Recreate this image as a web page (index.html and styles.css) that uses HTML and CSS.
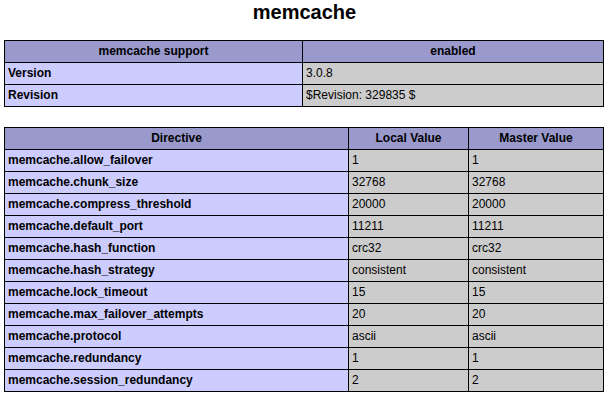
FILE: index.html
```html
<!DOCTYPE html>
<html>
<head>
<meta charset="utf-8">
<title>memcache</title>
<link rel="stylesheet" href="styles.css">
</head>
<body>
<h1 class="title">memcache</h1>
<table class="info">
  <colgroup><col class="c-support"><col></colgroup>
  <tr class="h"><th>memcache support</th><th>enabled</th></tr>
  <tr><td class="e">Version</td><td class="v">3.0.8</td></tr>
  <tr><td class="e">Revision</td><td class="v">$Revision: 329835 $</td></tr>
</table>
<table class="info directives">
  <colgroup><col class="c-dir"><col class="c-local"><col></colgroup>
  <tr class="h"><th>Directive</th><th>Local Value</th><th>Master Value</th></tr>
  <tr><td class="e">memcache.allow_failover</td><td class="v">1</td><td class="v">1</td></tr>
  <tr><td class="e">memcache.chunk_size</td><td class="v">32768</td><td class="v">32768</td></tr>
  <tr><td class="e">memcache.compress_threshold</td><td class="v">20000</td><td class="v">20000</td></tr>
  <tr><td class="e">memcache.default_port</td><td class="v">11211</td><td class="v">11211</td></tr>
  <tr><td class="e">memcache.hash_function</td><td class="v">crc32</td><td class="v">crc32</td></tr>
  <tr><td class="e">memcache.hash_strategy</td><td class="v">consistent</td><td class="v">consistent</td></tr>
  <tr><td class="e">memcache.lock_timeout</td><td class="v">15</td><td class="v">15</td></tr>
  <tr><td class="e">memcache.max_failover_attempts</td><td class="v">20</td><td class="v">20</td></tr>
  <tr><td class="e">memcache.protocol</td><td class="v">ascii</td><td class="v">ascii</td></tr>
  <tr><td class="e">memcache.redundancy</td><td class="v">1</td><td class="v">1</td></tr>
  <tr><td class="e">memcache.session_redundancy</td><td class="v">2</td><td class="v">2</td></tr>
</table>
</body>
</html>
```
FILE: styles.css
```css
body {
  margin: 0;
  font-family: "Liberation Sans", Arial, sans-serif;
  color: #000;
  background: #fff;
}
.title {
  margin: 0;
  height: 40px;
  font-size: 20px;
  line-height: 24px;
  text-align: center;
  font-weight: bold;
}
.info {
  width: 600px;
  margin: 0 0 0 4px;
  border-collapse: collapse;
  table-layout: fixed;
  font-size: 12px;
  line-height: 15px;
}
.info td,
.info th {
  border: 1px solid #000;
  padding: 3px 3px;
  text-align: left;
  white-space: nowrap;
  overflow: hidden;
}
.info th {
  background: #9999cc;
  text-align: center;
  font-weight: bold;
}
.c-support { width: 298px; }
.c-dir { width: 344px; }
.c-local { width: 120px; }
.e {
  background: #ccccff;
  font-weight: bold;
}
.v {
  background: #cccccc;
}
.directives {
  margin-top: 20px;
}
```
